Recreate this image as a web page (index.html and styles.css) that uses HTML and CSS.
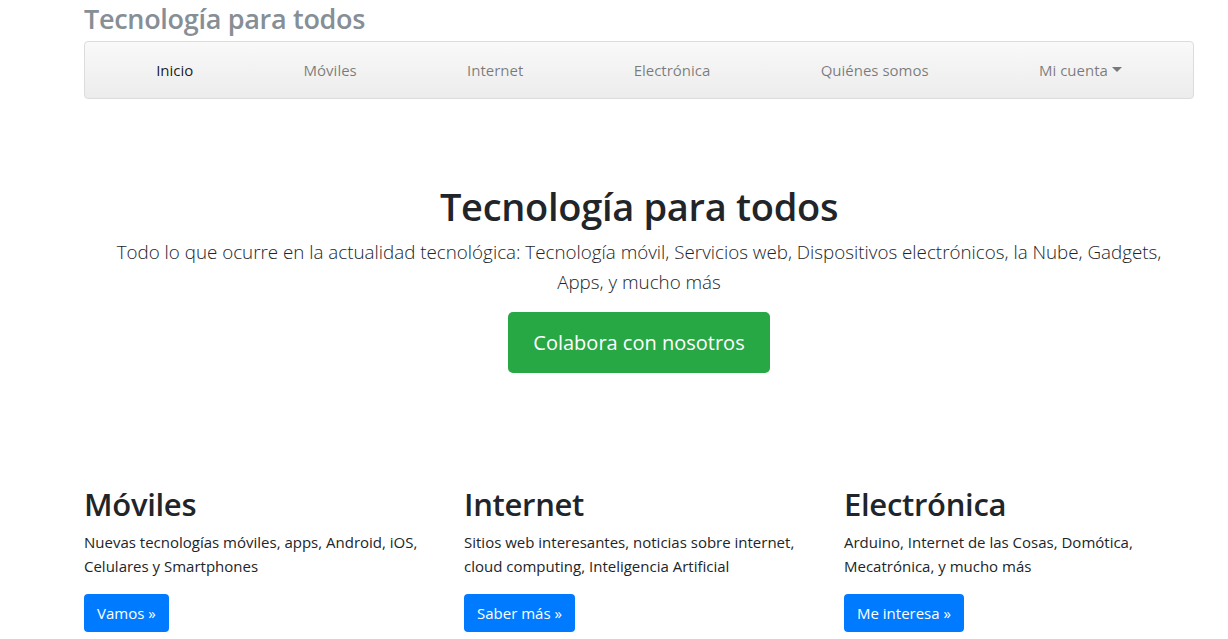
FILE: index.html
```html
<!DOCTYPE html>
<html lang="es">
<head>
<meta charset="utf-8">
<title>Tecnología para todos</title>
<link rel="stylesheet" href="styles.css">
</head>
<body>
<div class="container">
  <header class="masthead">
    <h3 class="brand">Tecnología para todos</h3>
    <nav class="navbar">
      <ul class="nav">
        <li class="nav-item"><a class="nav-link active" href="#">Inicio</a></li>
        <li class="nav-item"><a class="nav-link" href="#">Móviles</a></li>
        <li class="nav-item"><a class="nav-link" href="#">Internet</a></li>
        <li class="nav-item"><a class="nav-link" href="#">Electrónica</a></li>
        <li class="nav-item"><a class="nav-link" href="#">Quiénes somos</a></li>
        <li class="nav-item"><a class="nav-link dropdown-toggle" href="#">Mi cuenta</a></li>
      </ul>
    </nav>
  </header>

  <section class="jumbotron">
    <h1 class="hero-title">Tecnología para todos</h1>
    <p class="lead">Todo lo que ocurre en la actualidad tecnológica: Tecnología móvil, Servicios web, Dispositivos electrónicos, la Nube, Gadgets, Apps, y mucho más</p>
    <a class="btn btn-lg btn-success" href="#">Colabora con nosotros</a>
  </section>

  <section class="row">
    <div class="col">
      <h2 class="col-title">Móviles</h2>
      <p class="col-text">Nuevas tecnologías móviles, apps, Android, iOS, Celulares y Smartphones</p>
      <a class="btn btn-primary" href="#">Vamos &raquo;</a>
    </div>
    <div class="col">
      <h2 class="col-title">Internet</h2>
      <p class="col-text">Sitios web interesantes, noticias sobre internet, cloud computing, Inteligencia Artificial</p>
      <a class="btn btn-primary" href="#">Saber más &raquo;</a>
    </div>
    <div class="col">
      <h2 class="col-title">Electrónica</h2>
      <p class="col-text">Arduino, Internet de las Cosas, Domótica, Mecatrónica, y mucho más</p>
      <a class="btn btn-primary" href="#">Me interesa &raquo;</a>
    </div>
  </section>
</div>
</body>
</html>
```

FILE: styles.css
```css
* { box-sizing: border-box; }
html, body { margin: 0; padding: 0; }
body {
  font-family: "Open Sans", "Noto Sans", "Liberation Sans", sans-serif;
  font-size: 16px;
  line-height: 1.5;
  color: #212529;
  background: #fff;
  overflow: hidden;
}
.container {
  width: 1110px;
  margin-left: 84px;
}
.brand {
  margin: 2px 0 6px;
  font-size: 27px;
  line-height: 33px;
  font-weight: 600;
  color: #868e96;
  letter-spacing: -0.3px;
}
.navbar {
  border: 1px solid #dcdcdc;
  border-radius: 4px;
  background: linear-gradient(to bottom, #f9f9f9 0%, #ececec 100%);
  padding: 8px 16px;
}
.nav {
  display: flex;
  list-style: none;
  margin: 0;
  padding: 0;
}
.nav-item {
  flex: 1 1 auto;
  text-align: center;
}
.nav-link {
  display: block;
  padding: 9px 8px 8px;
  line-height: 23px;
  font-size: 15px;
  color: rgba(0,0,0,.5);
  text-decoration: none;
}
.nav-link.active { color: rgba(0,0,0,.9); }
.dropdown-toggle::after {
  content: "";
  display: inline-block;
  margin-left: 4px;
  vertical-align: 4px;
  border-top: 5px solid;
  border-left: 5px solid transparent;
  border-right: 5px solid transparent;
}
.jumbotron {
  text-align: center;
  padding: 83px 32px 0;
}
.hero-title {
  margin: 0 0 7px;
  font-size: 38px;
  line-height: 48px;
  font-weight: 600;
  color: #212529;
  letter-spacing: -0.3px;
}
.lead {
  margin: 0 0 15px;
  font-size: 18.8px;
  line-height: 30px;
  font-weight: 300;
  color: #212529;
}
.btn {
  display: inline-block;
  color: #fff;
  text-decoration: none;
  border-radius: 4px;
}
.btn-lg {
  padding: 14px 25px;
  font-size: 20px;
  line-height: 33px;
  border-radius: 5px;
}
.btn-success { background: #28a745; }
.btn-primary {
  background: #007bff;
  padding: 7px 13px;
  font-size: 15px;
  line-height: 24px;
}
.row {
  display: flex;
  margin-top: 112px;
  gap: 30px;
}
.col { flex: 1 1 0; }
.col-title {
  margin: 0 0 7px;
  font-size: 31px;
  line-height: 38px;
  font-weight: 600;
  letter-spacing: -0.3px;
}
.col-text {
  margin: 0 0 16px;
  font-size: 15px;
  line-height: 24px;
}
```
